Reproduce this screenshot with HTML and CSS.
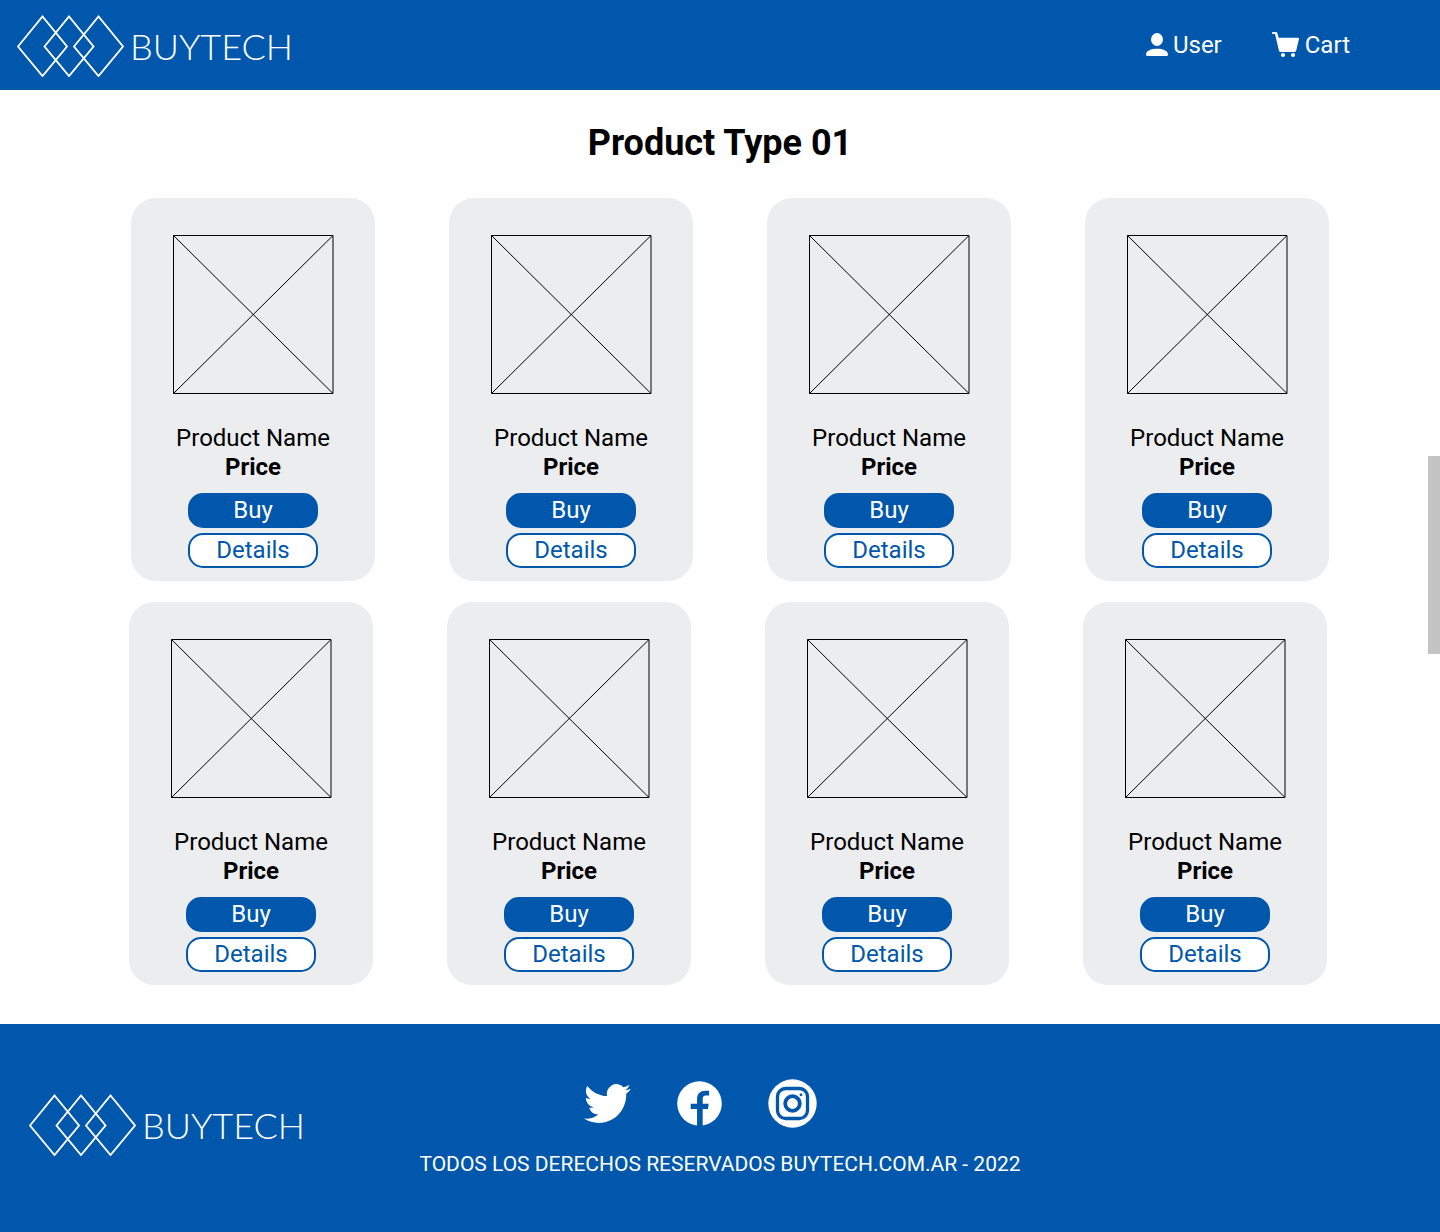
FILE: index.html
```
<!DOCTYPE html>
<html lang="en">
<head>
<meta charset="utf-8">
<meta name="viewport" content="width=device-width, initial-scale=1">
<title>BUYTECH - Product Type 01</title>
<link rel="stylesheet" href="styles.css">
</head>
<body>
<svg class="defs" aria-hidden="true">
  <symbol id="mark" viewBox="0 0 107 62">
    <path d="M1 31.500L25.500 1.500 50 31.500 25.500 61ZM27.500 31.500L52 1.500 76.500 31.500 52 61ZM57 31.500L81.500 1.500 106 31.500 81.500 61Z" fill="none" stroke="#fff" stroke-width="1.900"/>
  </symbol>
  <symbol id="photo" viewBox="0 0 161 159">
    <path d="M.5 .5H160V158.500H.5ZM.5 .5L160 158.500M160 .5L.5 158.500" fill="none" stroke="#000"/>
  </symbol>
</svg>

<header class="topbar">
  <a class="brand" href="#"><svg class="brand-mark" aria-hidden="true"><use href="#mark"/></svg><span>BUYTECH</span></a>
  <nav class="account">
    <a href="#">
      <svg width="22" height="24" viewBox="0 0 22 24" fill="#fff" aria-hidden="true"><ellipse cx="11" cy="6.500" rx="6" ry="6.500"/><path d="M0 21.500C0 17.500 5 15.700 11 15.700S22 17.500 22 21.500Q22 23 20.500 23H1.500Q0 23 0 21.500Z"/></svg>
      <span>User</span>
    </a>
    <a href="#">
      <svg width="28" height="26" viewBox="0 0 28 26" fill="#fff" aria-hidden="true"><path d="M.8 0H4Q5 0 5.300 1L6.700 5.700H26Q27.300 5.700 27 7L24.300 18.300Q24 20 22.500 20H8.700Q7.300 20 6.900 18.500L3 2H.8Q0 2 0 1T.8 0Z"/><circle cx="11" cy="23" r="2.100"/><circle cx="21" cy="23" r="2.100"/></svg>
      <span>Cart</span>
    </a>
  </nav>
</header>

<main class="catalog">
  <h1>Product Type 01</h1>
  <ul class="shelf">
    <li class="card"><svg class="photo" aria-hidden="true"><use href="#photo"/></svg><h2>Product Name</h2><p class="price">Price</p><button class="btn buy" type="button">Buy</button><button class="btn details" type="button">Details</button></li>
    <li class="card"><svg class="photo" aria-hidden="true"><use href="#photo"/></svg><h2>Product Name</h2><p class="price">Price</p><button class="btn buy" type="button">Buy</button><button class="btn details" type="button">Details</button></li>
    <li class="card"><svg class="photo" aria-hidden="true"><use href="#photo"/></svg><h2>Product Name</h2><p class="price">Price</p><button class="btn buy" type="button">Buy</button><button class="btn details" type="button">Details</button></li>
    <li class="card"><svg class="photo" aria-hidden="true"><use href="#photo"/></svg><h2>Product Name</h2><p class="price">Price</p><button class="btn buy" type="button">Buy</button><button class="btn details" type="button">Details</button></li>
  </ul>
  <ul class="shelf shelf-lower">
    <li class="card"><svg class="photo" aria-hidden="true"><use href="#photo"/></svg><h2>Product Name</h2><p class="price">Price</p><button class="btn buy" type="button">Buy</button><button class="btn details" type="button">Details</button></li>
    <li class="card"><svg class="photo" aria-hidden="true"><use href="#photo"/></svg><h2>Product Name</h2><p class="price">Price</p><button class="btn buy" type="button">Buy</button><button class="btn details" type="button">Details</button></li>
    <li class="card"><svg class="photo" aria-hidden="true"><use href="#photo"/></svg><h2>Product Name</h2><p class="price">Price</p><button class="btn buy" type="button">Buy</button><button class="btn details" type="button">Details</button></li>
    <li class="card"><svg class="photo" aria-hidden="true"><use href="#photo"/></svg><h2>Product Name</h2><p class="price">Price</p><button class="btn buy" type="button">Buy</button><button class="btn details" type="button">Details</button></li>
  </ul>
  <div class="scroll-thumb"></div>
</main>

<footer class="footer">
  <a class="brand" href="#"><svg class="brand-mark" aria-hidden="true"><use href="#mark"/></svg><span>BUYTECH</span></a>
  <div class="footer-center">
    <div class="social">
      <a href="#" aria-label="Twitter"><svg width="47" height="39" viewBox="0 2.200 24 19.600" preserveAspectRatio="none" fill="#fff"><path d="M23.953 4.570a10 10 0 01-2.825.775 4.958 4.958 0 002.163-2.723c-.951.555-2.005.959-3.127 1.184a4.920 4.920 0 00-8.384 4.482C7.690 8.095 4.067 6.130 1.640 3.162a4.822 4.822 0 00-.666 2.475c0 1.710.870 3.213 2.188 4.096a4.904 4.904 0 01-2.228-.616v.060a4.923 4.923 0 003.946 4.827 4.996 4.996 0 01-2.212.085 4.936 4.936 0 004.604 3.417 9.867 9.867 0 01-6.102 2.105c-.390 0-.779-.023-1.170-.067a13.995 13.995 0 007.557 2.209c9.053 0 13.998-7.496 13.998-13.985 0-.210 0-.420-.015-.630A9.935 9.935 0 0024 4.590z"/></svg></a>
      <a href="#" aria-label="Facebook"><svg width="45" height="45" viewBox="0 0 24 24"><circle cx="12" cy="12" r="11.900" fill="#fff"/><path fill="#0057ab" d="M10.700 24V14.900H7.300V12.100h3.400V9.500c0-2.700 1.800-4.300 4.300-4.300h2.100v2.500h-1.800c-1.200 0-1.600.8-1.600 1.900v2.500h3.200l-.4 2.800h-2.800V24z"/></svg></a>
      <a href="#" aria-label="Instagram"><svg width="49" height="49" viewBox="0 0 49 49"><circle cx="24.500" cy="24.500" r="24.200" fill="#fff"/><g fill="none" stroke="#0057ab"><rect x="9.500" y="9.500" width="30" height="30" rx="8" stroke-width="3.300"/><circle cx="24.500" cy="24.500" r="7.300" stroke-width="3.800"/></g><circle cx="33" cy="15.800" r="1.400" fill="#0057ab"/></svg></a>
    </div>
    <p>TODOS LOS DERECHOS RESERVADOS BUYTECH.COM.AR - 2022</p>
  </div>
</footer>
</body>
</html>
```
FILE: styles.css
```
* { box-sizing: border-box; }

body {
  margin: 0;
  background: #fff;
  color: #000;
  font-family: Roboto, "Liberation Sans", sans-serif;
  font-size: 24px;
  line-height: 29px;
}

h1, h2, p, ul { margin: 0; padding: 0; }
ul { list-style: none; }
a { color: #fff; text-decoration: none; }
svg { display: block; }
.defs { position: absolute; width: 0; height: 0; }

.topbar {
  display: flex;
  justify-content: space-between;
  align-items: center;
  height: 90px;
  padding: 2px 90px 0 17px;
  background: #0057ab;
}

.brand {
  display: flex;
  align-items: center;
  gap: 6px;
  font-family: Lato, "Liberation Sans", sans-serif;
  font-size: 36px;
  font-weight: 300;
  line-height: 62px;
}
.brand-mark { width: 107px; height: 62px; }

.account { display: flex; gap: 50px; padding-bottom: 2px; }
.account a { display: flex; align-items: center; gap: 5px; }

.catalog {
  position: relative;
  padding: 32px 0 39px 20px;
}
h1 {
  margin-bottom: 34px;
  padding-right: 20px;
  font-size: 36px;
  line-height: 42px;
  text-align: center;
}

.shelf { display: flex; justify-content: center; gap: 74px; }
.shelf-lower { margin-top: 21px; padding-right: 4px; }

.card {
  display: flex;
  flex-direction: column;
  align-items: center;
  width: 244px;
  padding: 37px 0 13px;
  border-radius: 25px;
  background: #ecedef;
}
.photo { width: 161px; height: 159px; margin-bottom: 30px; }
.card h2 { font-size: 24px; font-weight: 400; }
.price { margin-bottom: 11px; font-weight: 700; }

.btn {
  width: 130px;
  height: 35px;
  padding: 0;
  border: 2px solid #0057ab;
  border-radius: 15px;
  font: inherit;
}
.buy { margin-bottom: 5px; background: #0057ab; color: #fff; }
.details { background: #fff; color: #0057ab; }

.scroll-thumb {
  position: absolute;
  top: 366px;
  right: 0;
  width: 12px;
  height: 198px;
  background: #c4c4c4;
}

.footer {
  display: grid;
  grid-template-columns: 1fr auto 1fr;
  align-items: start;
  padding: 55px 0 49px;
  background: #0057ab;
  color: #fff;
}
.footer .brand { margin: 15px 0 0 29px; }
.footer-center {
  display: flex;
  flex-direction: column;
  align-items: center;
  gap: 18px;
  font-size: 21px;
}
.footer-center p { line-height: 37px; }
.social { display: flex; align-items: center; gap: 46px; padding-right: 38px; }
```
